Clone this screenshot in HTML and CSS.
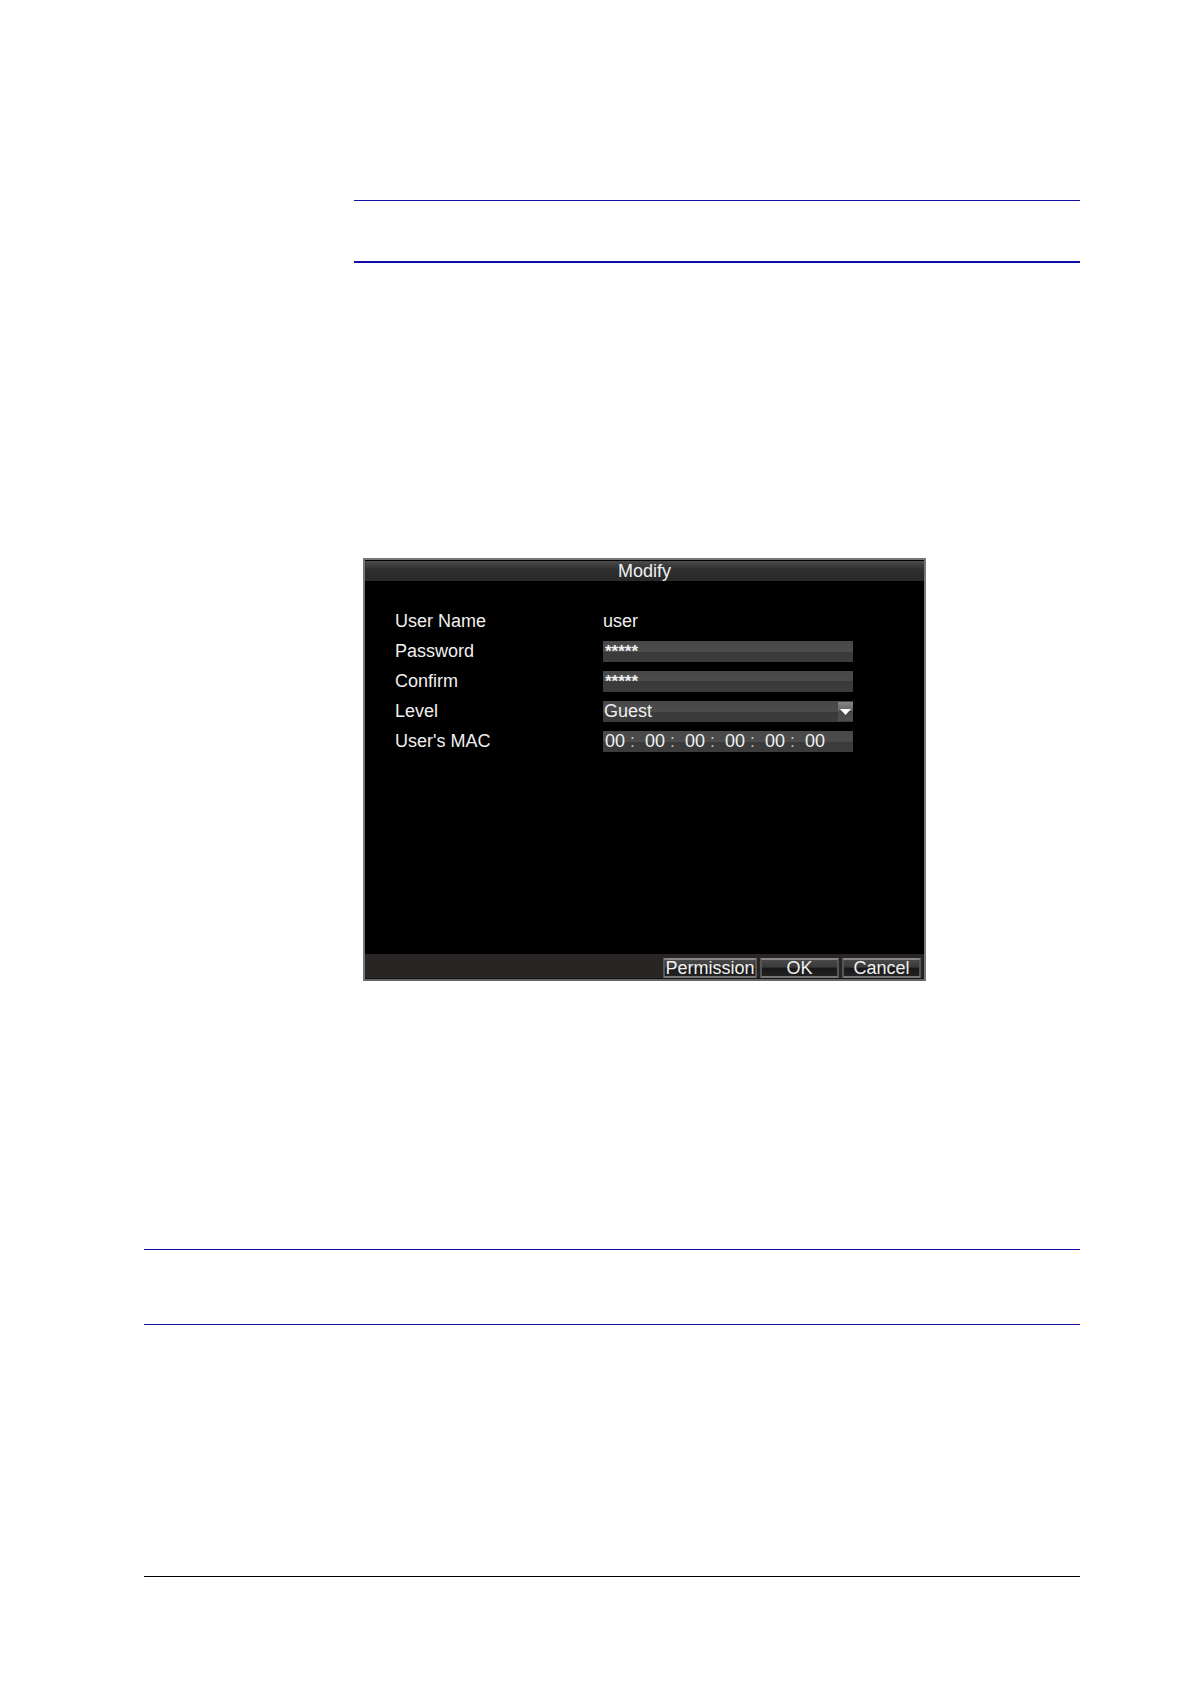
FILE: index.html
```html
<!DOCTYPE html>
<html lang="en">
<head>
  <meta charset="UTF-8">
  <meta name="viewport" content="width=device-width,initial-scale=1.0">
  <title>Modify</title>
  <link rel="stylesheet" href="styles.css">
</head>
<body>

<main class="page">

  <div class="content">
    <hr class="rule">
    <hr class="rule rule-thick">

    <!-- modify user dialog -->
    <form class="dialog">
      <h1 class="dialog-title">Modify</h1>

      <div class="dialog-body">
        <div class="row">
          <label for="userName">User Name</label>
          <output id="userName">user</output>
        </div>
        <div class="row">
          <label for="password">Password</label>
          <input class="field masked" id="password" type="text" value="*****" autocomplete="off">
        </div>
        <div class="row">
          <label for="confirm">Confirm</label>
          <input class="field masked" id="confirm" type="text" value="*****" autocomplete="off">
        </div>
        <div class="row">
          <label for="level">Level</label>
          <div class="select">
            <select class="field" id="level">
              <option>Guest</option>
            </select>
            <svg class="arrow" viewBox="0 0 15 19" aria-hidden="true"><path d="M2 7h11l-5.5 6z" fill="#fff"/></svg>
          </div>
        </div>
        <div class="row">
          <label for="mac1">User's MAC</label>
          <div class="field mac">
            <input id="mac1" type="text" value="00" maxlength="2"><span>:</span>
            <input type="text" value="00" maxlength="2" aria-label="MAC 2"><span>:</span>
            <input type="text" value="00" maxlength="2" aria-label="MAC 3"><span>:</span>
            <input type="text" value="00" maxlength="2" aria-label="MAC 4"><span>:</span>
            <input type="text" value="00" maxlength="2" aria-label="MAC 5"><span>:</span>
            <input type="text" value="00" maxlength="2" aria-label="MAC 6">
          </div>
        </div>
      </div>

      <div class="dialog-footer">
        <button class="btn btn-wide" type="button">Permission</button>
        <button class="btn" type="button">OK</button>
        <button class="btn" type="button">Cancel</button>
      </div>
    </form>
  </div>

  <hr class="rule section-start">
  <hr class="rule section-end">
  <hr class="rule page-end">

</main>

</body>
</html>
```

FILE: styles.css
```css
:root{
  --c-rule:#1010a8;
  --c-text:#f0f0f0;
}
*{box-sizing:border-box}
body{
  margin:0;background:#fff;
  font-family:"Liberation Sans",Arial,Helvetica,sans-serif;font-size:18px
}
.page{padding:200px 110px 107px 144px}
.content{padding-left:210px}

/* rules */
.rule{height:1px;margin:0;border:0;background:var(--c-rule)}
.rule-thick{height:2px;margin-top:60px}
.section-start{margin-top:268px}
.section-end{margin-top:74px}
.page-end{margin-top:251px;background:#000}

/* dialog */
.dialog{
  max-width:563px;margin:295px 0 0 9px;
  background:#000;color:var(--c-text);
  border:2px solid #777;border-bottom-color:#666
}
.dialog-title{
  margin:0;height:21px;line-height:20px;
  border-top:1px solid #000;
  background:linear-gradient(#4c4c4c,#303030 40%,#282828);
  font-size:18px;font-weight:400;text-align:center
}
.dialog-body{
  display:flex;flex-direction:column;gap:9px;
  padding:30px 71px 202px 30px
}
.row{display:flex;align-items:center;height:21px;line-height:23px}
.row label{flex:0 0 208px}
.field{
  flex:1;width:100%;min-width:0;height:21px;margin:0;padding:0 1px;
  border:0;border-radius:0;outline:0;
  background:linear-gradient(#484848,#4c4c4c 50%,#3a3a3a 50%,#3c3c3c);
  color:var(--c-text);font:inherit;line-height:20px
}
.masked{padding-left:2px;font-size:17px;font-weight:700}

.select{position:relative;flex:1}
.select .field{display:block;appearance:none;padding-bottom:2px}
.arrow{
  position:absolute;top:1px;right:0;width:15px;height:19px;
  background:linear-gradient(#858585,#666 45%,#484848 50%,#505050);
  pointer-events:none
}

.mac{display:flex;padding-left:2px}
.mac input{
  width:20px;height:20px;padding:0;border:0;outline:0;
  background:none;color:inherit;font:inherit
}
.mac span{width:20px;padding-left:5px;color:#bbb}

.dialog-footer{
  display:flex;justify-content:flex-end;align-items:flex-end;gap:3px;
  height:25px;padding-right:3px;
  background:#292524;border-bottom:1px solid #111
}
.btn{
  width:79px;height:20px;padding:0;
  border:2px solid #555;border-top-color:#888;border-bottom-color:#777;border-radius:1px;
  background:linear-gradient(#484848,#3a3a3a 45%,#181818 50%,#222);
  color:var(--c-text);font:inherit;line-height:16px
}
.btn-wide{width:94px}
```
